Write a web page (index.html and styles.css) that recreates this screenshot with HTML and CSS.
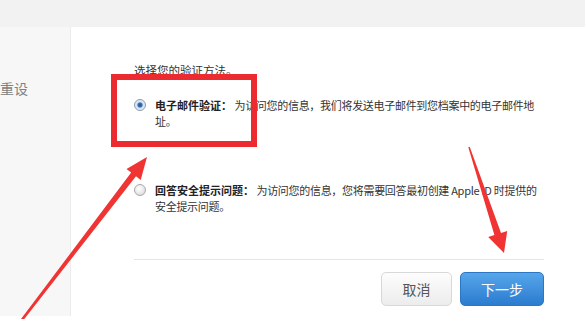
FILE: index.html
```html
<!DOCTYPE html>
<html>
<head>
    <title>选择验证方法</title>
    <meta name="viewport" content="width=device-width, initial-scale=1.0">
    <link rel="stylesheet" href="styles.css">
</head>
<body>
    <div class="topbar"></div>
    <div class="page">
        <div class="sidebar">
            <div class="side-item">重设</div>
        </div>

        <div class="main">
            <p class="intro">选择您的验证方法。</p>

            <div class="option">
                <span class="radio checked"></span>
                <div class="option-text">
                    <b>电子邮件验证：</b> <span class="desc">为访问您的信息，我们将发送电子邮件到您档案中的电子邮件地</span><br>
                    <span class="desc">址。</span>
                </div>
            </div>

            <div class="option second">
                <span class="radio"></span>
                <div class="option-text">
                    <b>回答安全提示问题：</b> <span class="desc">为访问您的信息，您将需要回答最初创建 Apple ID 时提供的</span><br>
                    <span class="desc">安全提示问题。</span>
                </div>
            </div>

            <div class="divider"></div>

            <div class="actions">
                <button class="btn btn-cancel">取消</button>
                <button class="btn btn-next">下一步</button>
            </div>
        </div>
    </div>

    <!-- 标注：红框和箭头 -->
    <div class="mark-box"></div>
    <svg class="marks" width="585" height="319" viewBox="0 0 585 319">
        <polygon fill="#f03434" points="21,319 131.2,172.6 126.5,168.9 147,157 140.7,179.9 136,176.2 23.5,320"/>
        <polygon fill="#f03434" points="468.3,147.3 494.4,235.1 488.2,237.1 504,253 507.2,230.9 501,232.9 469.7,146.8"/>
    </svg>
</body>
</html>
```

FILE: styles.css
```css
body {
    margin: 0;
    width: 585px;
    height: 319px;
    overflow: hidden;
    position: relative;
    background-color: #fff;
    font-family: "Noto Sans CJK SC", "Liberation Sans", sans-serif;
    color: #333;
}

.topbar {
    height: 27px;
    background-color: #f2f2f2;
}

.page {
    display: flex;
    height: 289px;
}

.sidebar {
    width: 71px;
    flex-shrink: 0;
    background-color: #f7f7f7;
    border-right: 1px solid #ebebeb;
    padding-top: 52px;
    box-sizing: border-box;
}

.side-item {
    font-size: 14px;
    line-height: 18px;
    color: #808080;
}

.main {
    padding: 35px 0 0 63px;
    width: 410px;
}

.intro {
    margin: 0;
    font-size: 11.5px;
    line-height: 17px;
    color: #333;
}

.option {
    display: flex;
    gap: 9px;
    margin-top: 18px;
    font-size: 11px;
    line-height: 16px;
    white-space: nowrap;
}

.option.second {
    margin-top: 53px;
}

.option b {
    color: #222;
}

.desc {
    letter-spacing: -0.3px;
    color: #333;
}

.radio {
    width: 12px;
    height: 12px;
    margin-top: 2px;
    flex-shrink: 0;
    border: 1px solid #a9a9a9;
    border-radius: 50%;
    box-sizing: border-box;
    background: radial-gradient(circle at 40% 35%, #ffffff 0%, #e6e6e6 60%, #cfcfcf 100%);
}

.radio.checked {
    border-color: #8a9bb0;
    background: radial-gradient(circle, #1d4f8c 0%, #3b78c0 30%, #d8e3ef 45%, #eef2f6 100%);
}

.divider {
    margin-top: 45px;
    border-top: 1px solid #e6e6e6;
}

.actions {
    display: flex;
    justify-content: flex-end;
    gap: 8px;
    margin-top: 12px;
}

.btn {
    height: 34px;
    border-radius: 5px;
    font-family: "Noto Sans CJK SC", sans-serif;
    font-size: 14px;
    cursor: pointer;
}

.btn-cancel {
    width: 71px;
    color: #555;
    border: 1px solid #d8d8d8;
    background: linear-gradient(#fdfdfd, #ececec);
}

.btn-next {
    width: 84px;
    color: #fff;
    border: 1px solid #2c76c4;
    background: linear-gradient(#56a6ea, #2b7bd0);
}

.mark-box {
    position: absolute;
    left: 111px;
    top: 74px;
    width: 146px;
    height: 73px;
    border: 6px solid #ec2b30;
    box-sizing: border-box;
}

.marks {
    position: absolute;
    left: 0;
    top: 0;
}
```
